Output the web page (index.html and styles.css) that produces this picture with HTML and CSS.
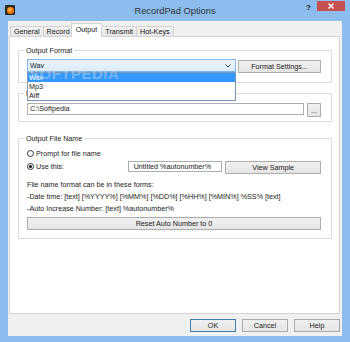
FILE: index.html
```html
<!DOCTYPE html>
<html lang="en">
<head>
    <meta charset="UTF-8">
    <title>RecordPad Options</title>
    <link rel="stylesheet" href="styles.css">
</head>
<body>
    <div class="window">
        <div class="titlebar">
            <div class="title-left">
                <span class="app-icon"><span class="app-dot"></span></span>
            </div>
            <div class="title">RecordPad Options</div>
            <div class="title-right">
                <span class="help">?</span>
                <span class="close">
                    <svg width="6" height="6" viewBox="0 0 6 6"><path d="M0.5 0.5 L5.5 5.5 M5.5 0.5 L0.5 5.5" stroke="#fff" stroke-width="1.3"/></svg>
                </span>
            </div>
        </div>

        <div class="client">
            <div class="tabs">
                <span class="tab">General</span>
                <span class="tab">Record</span>
                <span class="tab active">Output</span>
                <span class="tab">Transmit</span>
                <span class="tab">Hot-Keys</span>
            </div>

            <div class="panel">
                <div class="group group-format">
                    <div class="group-title">Output Format</div>
                    <div class="row row-format">
                        <div class="combo-wrap">
                            <div class="combo">
                                <span>Wav</span>
                                <svg width="6" height="4" viewBox="0 0 6 4"><path d="M0.5 0.5 L3 3 L5.5 0.5" fill="none" stroke="#444" stroke-width="1"/></svg>
                            </div>
                            <ul class="droplist">
                                <li class="selected">Wav</li>
                                <li>Mp3</li>
                                <li>Aiff</li>
                            </ul>
                            <span class="watermark">SOFTPEDIA</span>
                        </div>
                        <button type="button" class="btn btn-format">Format Settings...</button>
                    </div>
                </div>

                <div class="group group-folder">
                    <div class="group-title">D</div>
                    <div class="row row-folder">
                        <div class="textbox textbox-folder">C:\Softpedia</div>
                        <button type="button" class="btn btn-browse">...</button>
                    </div>
                </div>

                <div class="group group-name">
                    <div class="group-title">Output File Name</div>
                    <div class="row radio-row first">
                        <span class="radio"></span>
                        <span>Prompt for file name</span>
                    </div>
                    <div class="row radio-row second">
                        <div class="radio-label">
                            <span class="radio checked"></span>
                            <span>Use this:</span>
                        </div>
                        <div class="textbox textbox-name">Untitled %autonumber%</div>
                        <button type="button" class="btn btn-sample">View Sample</button>
                    </div>
                    <div class="hint first-hint">File name format can be in these forms:</div>
                    <div class="hint">-Date time: [text] [%YYYY%] [%MM%] [%DD%] [%HH%] [%MIN%] %SS% [text]</div>
                    <div class="hint">-Auto Increase Number: [text] %autonumber%</div>
                    <button type="button" class="btn btn-reset">Reset Auto Number to 0</button>
                </div>
            </div>

            <div class="actions">
                <button type="button" class="btn btn-dialog default">OK</button>
                <button type="button" class="btn btn-dialog">Cancel</button>
                <button type="button" class="btn btn-dialog">Help</button>
            </div>
        </div>
    </div>
</body>
</html>
```

FILE: styles.css
```css
* {
    box-sizing: border-box;
}

body {
    margin: 0;
    padding: 0;
    font-family: "Liberation Sans", Arial, sans-serif;
    font-size: 7.2px;
    color: #1a1a1a;
    background-color: #fff;
}

.window {
    width: 350px;
    height: 342px;
    background-color: #8cbdee;
    display: flex;
    flex-direction: column;
}

/* title bar */
.titlebar {
    height: 21px;
    display: grid;
    grid-template-columns: 1fr auto 1fr;
    align-items: start;
}

.title-left {
    padding: 5px 0 0 5px;
}

.app-icon {
    width: 10px;
    height: 10px;
    background-color: #2b2b2b;
    display: flex;
    align-items: center;
    justify-content: center;
    border-radius: 1px;
}

.app-dot {
    width: 7px;
    height: 7px;
    border-radius: 50%;
    background: radial-gradient(circle at 40% 35%, #ffb347, #f26a00 70%);
}

.title {
    font-size: 9.3px;
    color: #333;
    padding-top: 6px;
}

.title-right {
    display: flex;
    justify-content: flex-end;
    align-items: flex-start;
    padding-right: 5px;
}

.help {
    font-size: 8px;
    font-weight: bold;
    color: #222;
    margin: 3px 6px 0 0;
}

.close {
    width: 28px;
    height: 10px;
    margin-top: 1px;
    background-color: #c75050;
    display: flex;
    align-items: center;
    justify-content: center;
}

/* client area */
.client {
    flex: 1;
    margin: 0 8px 6px 8px;
    background-color: #f0f0f0;
    padding: 2px 2px 0 1px;
    display: flex;
    flex-direction: column;
}

.tabs {
    height: 13px;
    display: flex;
    align-items: flex-end;
    padding-left: 1px;
}

.tab {
    height: 10px;
    line-height: 9px;
    padding: 0 3px;
    border: 1px solid #d4d4d4;
    border-bottom: none;
    margin-right: -1px;
    background: linear-gradient(#f2f2f2, #e6e6e6);
}

.tab.active {
    height: 14px;
    line-height: 11px;
    padding: 0 4px;
    margin: 0 -1px -1px -2px;
    background: #fff;
    position: relative;
    z-index: 1;
}

.panel {
    height: 278px;
    background-color: #fff;
    border: 1px solid #d4d4d4;
    padding: 0 7px 0 8px;
}

/* group boxes */
.group {
    border: 1px solid #dcdcdc;
    padding: 0 10px 0 8px;
}

.group-title {
    width: fit-content;
    height: 9px;
    line-height: 9px;
    margin: -5px 0 0 -3px;
    padding: 0 2px;
    background-color: #fff;
}

.group-format {
    margin-top: 13px;
    height: 33px;
}

.group-folder {
    margin-top: 10px;
    height: 29px;
}

.group-name {
    margin-top: 16px;
    height: 101px;
}

.row {
    display: flex;
    align-items: flex-start;
}

.row-format {
    margin-top: 4px;
}

.row-folder {
    margin-top: 5px;
}

/* combobox and its open list */
.combo-wrap {
    position: relative;
    width: 209px;
}

.combo {
    height: 13px;
    border: 1px solid #7eb4ea;
    background: linear-gradient(#ecf4fc, #dcecfc);
    display: flex;
    align-items: center;
    justify-content: space-between;
    padding: 0 4px 0 2px;
}

.droplist {
    position: absolute;
    top: 13px;
    left: 0;
    width: 209px;
    margin: 0;
    padding: 0;
    list-style: none;
    background-color: #fff;
    border: 1px solid #7a96b8;
    z-index: 5;
}

.droplist li {
    height: 9px;
    line-height: 9px;
    padding-left: 1px;
}

.droplist li.selected {
    background-color: #3399ff;
    color: #fff;
}

.watermark {
    position: absolute;
    top: 6px;
    left: 2px;
    font-size: 15px;
    font-weight: bold;
    letter-spacing: 0.5px;
    color: rgba(235, 235, 235, 0.35);
    z-index: 6;
}

/* buttons and text boxes */
.btn {
    font-family: "Liberation Sans", Arial, sans-serif;
    font-size: 7.2px;
    color: #1a1a1a;
    height: 13px;
    padding: 0;
    border: 1px solid #acacac;
    background: linear-gradient(#f0f0f0, #e5e5e5);
    border-radius: 0;
}

.btn-format {
    width: 83px;
    margin-left: 2px;
    margin-top: 1px;
}

.textbox {
    height: 12px;
    line-height: 10px;
    border: 1px solid #abadb3;
    padding: 0 2px;
    background-color: #fff;
}

.textbox-folder {
    width: 277px;
}

.btn-browse {
    width: 14px;
    height: 14px;
    margin-left: 3px;
}

.radio-row.first {
    margin-top: 5px;
    height: 10px;
    align-items: center;
    gap: 2px;
}

.radio-row.second {
    margin-top: 3px;
}

.radio-label {
    width: 101px;
    height: 11px;
    display: flex;
    align-items: center;
    gap: 2px;
}

.radio {
    width: 7px;
    height: 7px;
    border: 1px solid #333;
    border-radius: 50%;
    background-color: #fff;
    display: flex;
    align-items: center;
    justify-content: center;
}

.radio.checked::after {
    content: "";
    width: 3px;
    height: 3px;
    border-radius: 50%;
    background-color: #111;
}

.textbox-name {
    width: 95px;
    height: 11px;
    line-height: 9px;
    padding-left: 5px;
}

.btn-sample {
    width: 96px;
    margin-left: 3px;
}

.hint {
    line-height: 12px;
}

.first-hint {
    margin-top: 5px;
}

.btn-reset {
    width: 294px;
    margin-top: 2px;
    display: block;
}

/* dialog buttons */
.actions {
    display: flex;
    justify-content: flex-end;
    gap: 6px;
    margin-top: 5px;
}

.btn-dialog {
    width: 46px;
}

.btn-dialog.default {
    border-color: #3c7fb1;
}
```
